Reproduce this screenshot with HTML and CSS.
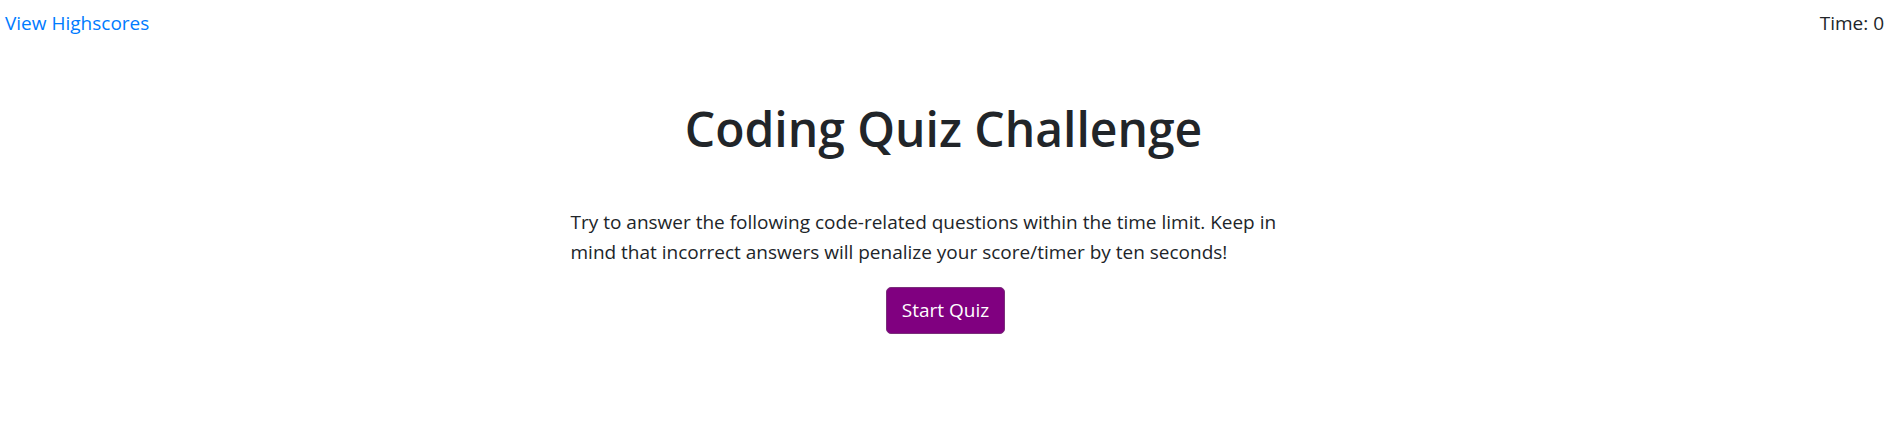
FILE: index.html
```html
<!DOCTYPE html>
<html lang="en">
<head>
<meta charset="utf-8">
<title>Coding Quiz Challenge</title>
<link rel="stylesheet" href="styles.css">
</head>
<body>
<header class="topbar">
  <a class="highscores" href="#">View Highscores</a>
  <div class="timer">Time: <span>0</span></div>
</header>
<main class="quiz">
  <h1 class="title">Coding Quiz Challenge</h1>
  <p class="intro">Try to answer the following code-related questions within the time limit. Keep in mind that incorrect answers will penalize your score/timer by ten seconds!</p>
  <button class="start" type="button">Start Quiz</button>
</main>
</body>
</html>
```
FILE: styles.css
```css
html, body {
  margin: 0;
  padding: 0;
  background: #fff;
}
body {
  font-family: "Open Sans", "Noto Sans", "Liberation Sans", sans-serif;
  color: #212529;
  font-size: 20px;
}
.topbar {
  display: flex;
  justify-content: space-between;
  align-items: flex-start;
  padding: 8px 19px 0 5px;
  line-height: 30px;
  font-size: 19px;
}
.highscores {
  color: #007bff;
  text-decoration: none;
}
.timer {
  color: #212529;
}
.quiz {
  display: flex;
  flex-direction: column;
  align-items: center;
  padding-right: 16px;
}
.title {
  margin: 61px 0 0;
  font-size: 48px;
  font-weight: 600;
  line-height: 60px;
  color: #212529;
}
.intro {
  width: 746px;
  margin: 48px 0 0;
  font-size: 19px;
  line-height: 30px;
  text-align: left;
}
.start {
  margin-top: 20px;
  margin-left: 4px;
  background: #800080;
  color: #fff;
  border: 1px solid #7a2f7a;
  border-radius: 5px;
  font-family: inherit;
  font-size: 19px;
  line-height: 29px;
  padding: 8px 15px;
  cursor: pointer;
}
```
